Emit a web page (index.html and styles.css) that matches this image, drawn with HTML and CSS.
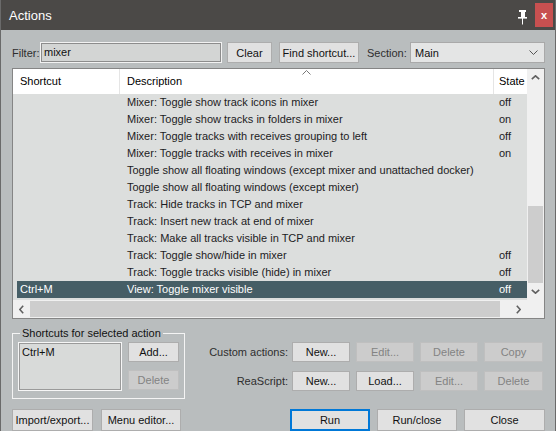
FILE: index.html
```html
<!DOCTYPE html>
<html>
<head>
<meta charset="utf-8">
<link rel="stylesheet" href="styles.css">
</head>
<body>
<div class="window">
  <header class="titlebar">
    <span class="title">Actions</span>
    <svg class="pin" width="10" height="15" viewBox="0 0 10 15">
      <rect x="1" y="0" width="7" height="2" fill="#fff"/>
      <rect x="3" y="2" width="4" height="5" fill="#fff"/>
      <rect x="0" y="7" width="9" height="1.6" fill="#fff"/>
      <rect x="4" y="8" width="1" height="6.5" fill="#fff"/>
    </svg>
    <span class="close">x</span>
  </header>

  <div class="filter-row">
    <span class="lbl filter-lbl">Filter:</span>
    <div class="input filter-input">mixer</div>
    <button class="btn clear-btn">Clear</button>
    <button class="btn find-btn">Find shortcut...</button>
    <span class="lbl section-lbl">Section:</span>
    <div class="select">
      <span>Main</span>
      <svg width="9" height="5" viewBox="0 0 9 5"><polyline points="0.5,0.5 4.5,4.5 8.5,0.5" fill="none" stroke="#555" stroke-width="1"/></svg>
    </div>
  </div>

  <div class="table">
    <div class="table-main">
      <div class="list">
        <div class="row head">
          <div class="c c1">Shortcut</div>
          <div class="c c2">Description
            <svg class="sort" width="9" height="5" viewBox="0 0 9 5"><polyline points="0.5,4.5 4.5,0.5 8.5,4.5" fill="none" stroke="#777" stroke-width="1"/></svg>
          </div>
          <div class="c c3">State</div>
        </div>
        <div class="row"><div class="c c1"></div><div class="c c2">Mixer: Toggle show track icons in mixer</div><div class="c c3">off</div></div>
        <div class="row"><div class="c c1"></div><div class="c c2">Mixer: Toggle show tracks in folders in mixer</div><div class="c c3">on</div></div>
        <div class="row"><div class="c c1"></div><div class="c c2">Mixer: Toggle tracks with receives grouping to left</div><div class="c c3">off</div></div>
        <div class="row"><div class="c c1"></div><div class="c c2">Mixer: Toggle tracks with receives in mixer</div><div class="c c3">on</div></div>
        <div class="row"><div class="c c1"></div><div class="c c2">Toggle show all floating windows (except mixer and unattached docker)</div><div class="c c3"></div></div>
        <div class="row"><div class="c c1"></div><div class="c c2">Toggle show all floating windows (except mixer)</div><div class="c c3"></div></div>
        <div class="row"><div class="c c1"></div><div class="c c2">Track: Hide tracks in TCP and mixer</div><div class="c c3"></div></div>
        <div class="row"><div class="c c1"></div><div class="c c2">Track: Insert new track at end of mixer</div><div class="c c3"></div></div>
        <div class="row"><div class="c c1"></div><div class="c c2">Track: Make all tracks visible in TCP and mixer</div><div class="c c3"></div></div>
        <div class="row"><div class="c c1"></div><div class="c c2">Track: Toggle show/hide in mixer</div><div class="c c3">off</div></div>
        <div class="row"><div class="c c1"></div><div class="c c2">Track: Toggle tracks visible (hide) in mixer</div><div class="c c3">off</div></div>
        <div class="row selected"><div class="c c1">Ctrl+M</div><div class="c c2">View: Toggle mixer visible</div><div class="c c3">off</div></div>
      </div>
      <div class="vscroll">
        <div class="sb-btn">
          <svg width="9" height="5" viewBox="0 0 9 5"><polyline points="0.8,4.2 4.5,0.8 8.2,4.2" fill="none" stroke="#606060" stroke-width="1.6"/></svg>
        </div>
        <div class="vtrack"><div class="vthumb"></div></div>
        <div class="sb-btn">
          <svg width="9" height="5" viewBox="0 0 9 5"><polyline points="0.8,0.8 4.5,4.2 8.2,0.8" fill="none" stroke="#606060" stroke-width="1.6"/></svg>
        </div>
      </div>
    </div>
    <div class="hscroll-row">
      <div class="sb-btn hbtn">
        <svg width="5" height="9" viewBox="0 0 5 9"><polyline points="4.2,0.8 0.8,4.5 4.2,8.2" fill="none" stroke="#606060" stroke-width="1.6"/></svg>
      </div>
      <div class="htrack"><div class="hthumb"></div></div>
      <div class="sb-btn hbtn">
        <svg width="5" height="9" viewBox="0 0 5 9"><polyline points="0.8,0.8 4.2,4.5 0.8,8.2" fill="none" stroke="#606060" stroke-width="1.6"/></svg>
      </div>
      <div class="corner"></div>
    </div>
  </div>

  <div class="middle">
    <fieldset class="group">
      <legend>Shortcuts for selected action</legend>
      <div class="group-body">
        <div class="listbox">Ctrl+M</div>
        <div class="group-btns">
          <button class="btn small">Add...</button>
          <button class="btn small disabled">Delete</button>
        </div>
      </div>
    </fieldset>
    <div class="actions-grid">
      <span class="lbl grid-lbl">Custom actions:</span>
      <button class="btn">New...</button>
      <button class="btn disabled">Edit...</button>
      <button class="btn disabled">Delete</button>
      <button class="btn disabled">Copy</button>
      <span class="lbl grid-lbl">ReaScript:</span>
      <button class="btn">New...</button>
      <button class="btn">Load...</button>
      <button class="btn disabled">Edit...</button>
      <button class="btn disabled">Delete</button>
    </div>
  </div>

  <div class="bottom-row">
    <button class="btn b81">Import/export...</button>
    <button class="btn b80">Menu editor...</button>
    <div class="spacer"></div>
    <button class="btn b80 primary">Run</button>
    <button class="btn b80">Run/close</button>
    <button class="btn b81">Close</button>
  </div>
</div>
</body>
</html>
```

FILE: styles.css
```css
* { box-sizing: border-box; }

html, body {
  margin: 0;
  padding: 0;
}

body {
  width: 556px;
  height: 431px;
  overflow: hidden;
  background: #b9bdbe;
  font-family: "Liberation Sans", Arial, sans-serif;
  font-size: 11px;
  color: #111;
}

.window {
  width: 556px;
  height: 431px;
  display: flex;
  flex-direction: column;
  border-left: 1px solid #6a6a6a;
  border-right: 1px solid #6a6a6a;
  background: #b9bdbe;
}

/* title bar */
.titlebar {
  height: 30px;
  flex: none;
  background: #4b4947;
  display: flex;
  align-items: center;
  padding-left: 8px;
}
.title {
  color: #fff;
  font-size: 13px;
  flex: 1;
}
.pin {
  align-self: flex-start;
  margin-top: 10px;
  margin-right: 7px;
}
.close {
  width: 18px;
  height: 24px;
  margin-right: 2px;
  background: #c75050;
  color: #fff;
  font-weight: bold;
  font-size: 11px;
  display: flex;
  align-items: center;
  justify-content: center;
  padding-bottom: 1px;
}

/* filter row */
.filter-row {
  display: flex;
  align-items: center;
  height: 21px;
  margin-top: 12px;
  padding-left: 11px;
  flex: none;
}
.lbl {
  color: #2e2e2e;
  white-space: nowrap;
}
.filter-lbl { width: 28px; }
.input {
  height: 21px;
  background: #d3d5d4;
  border: 1px solid #f2f2f2;
  box-shadow: inset 0 0 0 1px #8c8c8c;
  padding: 2px 3px;
  line-height: 15px;
  color: #111;
}
.filter-input { width: 182px; }

.btn {
  font-family: "Liberation Sans", Arial, sans-serif;
  font-size: 11px;
  color: #111;
  background: #e1e1e1;
  border: 1px solid #adadad;
  height: 20px;
  padding: 0;
  margin: 0;
  white-space: nowrap;
}
.btn.disabled {
  background: #cccccc;
  border-color: #bfbfbf;
  color: #838383;
}
.clear-btn { width: 45px; margin-left: 5px; height: 21px; }
.find-btn { width: 80px; margin-left: 7px; height: 21px; }
.section-lbl { margin-left: 8px; width: 43px; }

.select {
  width: 135px;
  height: 21px;
  background: #e4e5e5;
  border: 1px solid #a9a9a9;
  display: flex;
  align-items: center;
  justify-content: space-between;
  padding: 0 6px 0 4px;
  color: #111;
}

/* table */
.table {
  flex: none;
  margin: 5px 10px 0 11px;
  height: 251px;
  border: 1px solid #858585;
  display: flex;
  flex-direction: column;
  background: #dcdedd;
}
.table-main {
  display: flex;
  height: 231px;
}
.list {
  width: 514px;
  background: #dcdedd;
  color: #1c1c24;
}
.row {
  display: flex;
  height: 17px;
  line-height: 17px;
  white-space: nowrap;
}
.row.head {
  height: 25px;
  line-height: 25px;
  background: #fff;
  color: #000;
}
.row.head .c1, .row.head .c2 { border-right: 1px solid #e5e5e5; }
.c { overflow: hidden; position: relative; }
.c1 { width: 107px; padding-left: 7px; }
.c2 { width: 374px; padding-left: 7px; }
.c3 { width: 33px; padding-left: 5px; }
.sort {
  position: absolute;
  left: 182px;
  top: 1px;
}
.row.selected {
  margin-left: 4px;
  background: #465e66;
  color: #fff;
}
.row.selected .c1 { width: 103px; padding-left: 3px; }

/* scrollbars */
.vscroll {
  width: 17px;
  background: #f0f0f0;
  display: flex;
  flex-direction: column;
}
.sb-btn {
  width: 17px;
  height: 17px;
  flex: none;
  display: flex;
  align-items: center;
  justify-content: center;
  background: #f0f0f0;
}
.vtrack {
  flex: 1;
  display: flex;
  flex-direction: column;
  justify-content: flex-end;
}
.vthumb {
  height: 77px;
  margin: 0 1px;
  background: #cdcdcd;
}
.hscroll-row {
  display: flex;
  height: 18px;
  background: #f0f0f0;
}
.hbtn { height: 18px; }
.htrack {
  width: 480px;
  display: flex;
  align-items: center;
}
.hthumb {
  width: 470px;
  height: 16px;
  background: #cdcdcd;
}
.corner {
  width: 17px;
  background: #f0f0f0;
}

/* middle */
.middle {
  flex: none;
  display: flex;
  margin-top: 8px;
  height: 72px;
  padding-left: 11px;
}
.group {
  width: 173px;
  margin: 0;
  padding: 2px 5px 5px 5px;
  border: 1px solid #f4f4f4;
  min-width: 0;
}
.group legend {
  padding: 0 2px;
  margin-left: 2px;
  line-height: 13px;
  color: #111;
}
.group-body {
  display: flex;
  gap: 6px;
}
.listbox {
  width: 104px;
  height: 49px;
  background: #d8dad9;
  border: 1px solid #f6f6f6;
  box-shadow: inset 0 0 0 1px #9a9a9a;
  padding: 3px 3px;
  color: #111;
}
.group-btns {
  display: flex;
  flex-direction: column;
  gap: 8px;
}
.btn.small { width: 51px; height: 20px; }

.actions-grid {
  margin-left: auto;
  margin-right: 12px;
  margin-top: 15px;
  display: grid;
  grid-template-columns: auto 58px 58px 58px 59px;
  grid-auto-rows: 20px;
  column-gap: 6px;
  row-gap: 9px;
  align-self: flex-start;
}
.grid-lbl {
  text-align: right;
  line-height: 20px;
  margin-right: -2px;
}

/* bottom row */
.bottom-row {
  flex: none;
  display: flex;
  margin-top: 10px;
  padding: 0 10px 0 11px;
  gap: 8px;
  height: 22px;
}
.bottom-row .btn { height: 22px; }
.b80 { width: 80px; }
.b81 { width: 81px; }
.spacer { flex: 1; }
.bottom-row .primary { border: 2px solid #0078d7; }
.bottom-row .primary ~ .btn { margin-left: -1px; }
```
